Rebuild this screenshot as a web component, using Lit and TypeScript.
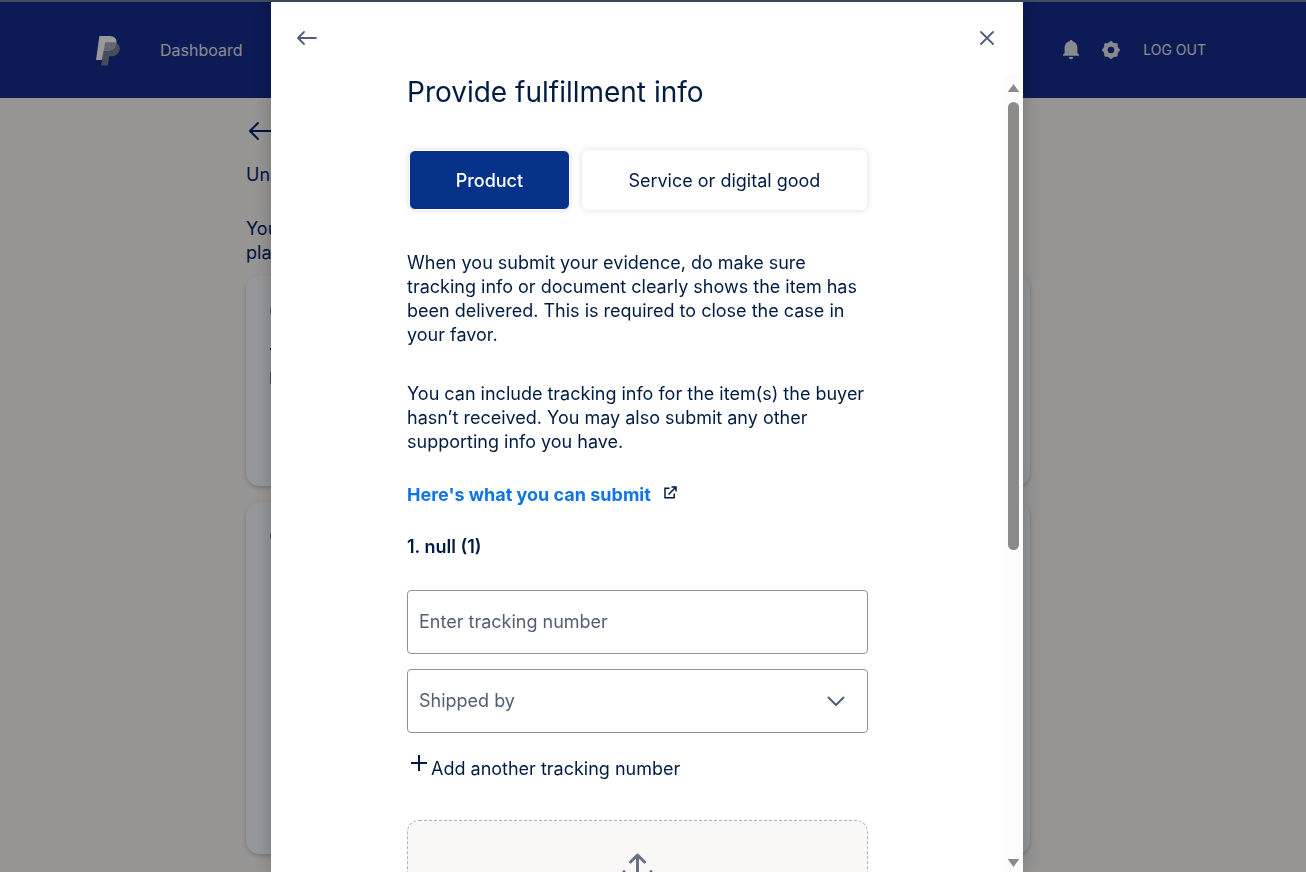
import { LitElement, html, css, svg } from "lit";
import { customElement, state } from "lit/decorators.js";

const stroke = (d: string, size: number, width: number) => html`
  <svg width=${size} height=${size} viewBox="0 0 ${size} ${size}" fill="none" stroke="currentColor"
    stroke-width=${width} stroke-linecap="round" stroke-linejoin="round" aria-hidden="true">
    ${svg`<path d=${d}></path>`}
  </svg>`;

@customElement("account-page")
export class AccountPage extends LitElement {
  static styles = css`
    :host {
      display: block;
      min-height: 100vh;
      background: #faf8f5;
      color: #00216b;
      font-size: 18px;
      line-height: 24px;
    }
    .bar {
      box-sizing: border-box;
      height: 98px;
      border-top: 2px solid #6e7f9c;
      background: #142c8e;
      padding: 0 100px 0 96px;
      display: flex;
      align-items: center;
      color: #e4e8ec;
    }
    .bar a {
      color: inherit;
      text-decoration: none;
    }
    .logo {
      display: block;
      width: 24px;
      height: 30px;
      margin-top: 2px;
    }
    .nav {
      margin-left: 40px;
      font-size: 16px;
      flex: 1;
    }
    .tools {
      display: flex;
      align-items: center;
      gap: 20px;
    }
    .icon {
      border: 0;
      padding: 0;
      background: none;
      color: #e4e6ec;
      display: block;
      height: 20px;
      cursor: pointer;
    }
    .icon svg {
      display: block;
    }
    .logout {
      font-size: 14px;
      margin-left: 2px;
    }
    .content {
      max-width: 784px;
      margin: 0 auto;
      padding: 20px 30px 0 0;
    }
    .back {
      display: block;
      height: 26px;
      color: #00216b;
    }
    p {
      margin: 0;
    }
    .status {
      padding-top: 19px;
    }
    .note {
      padding: 30px 0 10px;
    }
    .card {
      box-sizing: border-box;
      height: 211px;
      margin-bottom: 16px;
      padding: 30px 24px;
      border-radius: 14px;
      background: #f9fbff;
      box-shadow: 0 2px 4px rgba(0, 20, 70, 0.2);
    }
    .card.tall {
      height: 352px;
      padding-top: 28px;
    }
    .card svg {
      display: block;
    }
  `;

  render() {
    return html`
      <header class="bar">
        <a href="#home" aria-label="PayPal">
          <svg class="logo" viewBox="0 0 24 30" aria-hidden="true">
            <path fill="#75819c" d="M20.6 7.2C23.4 8.6 24.3 11 23.5 14.2C22.5 18.4 19.4 20.2 15 20.2H13.2L11.8 29.6H5.2L8.6 7.2Z"></path>
            <path fill="#fff" d="M3.4 0H13.2C18.6 0 21.3 3 20.3 7.6C19.2 12.6 16 14.8 10.9 14.8H7.6L6 24H0Z"></path>
            <path fill="#a3abc0" d="M9.2 6.2H17.6C18.8 6.2 19.8 6.6 20.4 7.1C19.4 12.5 16 14.8 10.9 14.8H7.7Z"></path>
          </svg>
        </a>
        <nav class="nav"><a href="#dashboard">Dashboard</a></nav>
        <div class="tools">
          <button class="icon" aria-label="Notifications">
            <svg width="20" height="20" viewBox="0 0 20 20" fill="currentColor" aria-hidden="true">
              <path d="M10 0C10.900 0 11.500.6 11.600 1.300C14.800 2.200 16.400 4.600 16.400 7.600V13.200L18 14.600V15.800H2V14.600L3.600 13.200V7.600C3.600 4.600 5.200 2.200 8.400 1.300C8.500.6 9.100 0 10 0ZM7.800 17H12.200C12 18.500 11.200 19.200 10 19.200S8 18.500 7.800 17Z"></path>
            </svg>
          </button>
          <button class="icon" aria-label="Settings">
            <svg width="20" height="20" viewBox="0 0 20 20" aria-hidden="true">
              <circle cx="10" cy="10" r="5.500" fill="none" stroke="currentColor" stroke-width="4.400"></circle>
              <path fill="none" stroke="currentColor" stroke-width="3.600" stroke-linecap="round"
                d="M10 2.800V2.800M15.100 4.900V4.900M17.200 10V10M15.100 15.100V15.100M10 17.200V17.200M4.900 15.100V15.100M2.800 10V10M4.900 4.900V4.900"></path>
            </svg>
          </button>
          <a class="logout" href="#logout">LOG OUT</a>
        </div>
      </header>
      <main class="content">
        <a class="back" href="#back" aria-label="Back">${stroke("M4 13H26M12 5L4 13L12 21", 26, 2)}</a>
        <p class="status">Una</p>
        <p class="note">You<br />pla</p>
        <section class="card">
          <svg width="16" height="80" viewBox="0 0 16 80" fill="none" stroke="#5f7fb5" stroke-width="2" aria-hidden="true">
            <circle cx="8" cy="6" r="7"></circle>
            <path d="M0 44H8" stroke="#00216b"></path>
            <path d="M1 67V79"></path>
          </svg>
        </section>
        <section class="card tall">
          <svg width="16" height="14" viewBox="0 0 16 14" fill="none" stroke="#5f7fb5" stroke-width="2" aria-hidden="true">
            <circle cx="8" cy="6" r="7"></circle>
          </svg>
        </section>
      </main>
    `;
  }
}

@customElement("fulfillment-dialog")
export class FulfillmentDialog extends LitElement {
  static styles = css`
    :host {
      box-sizing: border-box;
      width: 752px;
      max-width: 100%;
      height: 100%;
      display: flex;
      flex-direction: column;
      background: #fff;
      color: #001c43;
      box-shadow: 0 0 18px rgba(0, 0, 0, 0.22);
      font-size: 18px;
      line-height: 24px;
    }
    button,
    input,
    select {
      font: inherit;
      color: inherit;
    }
    svg {
      display: block;
    }
    .top {
      display: flex;
      justify-content: space-between;
      height: 72px;
      flex: none;
      padding: 0 24px;
      align-items: center;
    }
    .icon {
      border: 0;
      padding: 0;
      background: none;
      color: #545d7a;
      cursor: pointer;
    }
    .body {
      flex: 1;
      min-height: 0;
      display: flex;
    }
    .form {
      flex: 1;
      min-width: 0;
      overflow: hidden;
      padding: 0 136px;
    }
    .scroll {
      width: 19px;
      box-sizing: border-box;
      padding: 9px 4px 4px;
      display: flex;
      flex-direction: column;
      background: #fcfcfc;
      color: #8c8b89;
    }
    .track {
      flex: 1;
      padding: 9px 0;
    }
    .thumb {
      height: 60%;
      border-radius: 6px;
      background: #8c8b89;
    }
    h1 {
      margin: 0;
      font-size: 28px;
      line-height: 36px;
      font-weight: 400;
    }
    .tabs {
      display: flex;
      gap: 12px;
      padding: 0 1px 0 2px;
      margin: 40px 0 41px;
    }
    .tab {
      flex: 1 1 auto;
      height: 60px;
      padding: 2px 44px 0;
      white-space: nowrap;
      border: 1px solid #fff;
      border-radius: 6px;
      background: #fff;
      box-shadow: 0 0 6px rgba(0, 20, 53, 0.14);
      cursor: pointer;
    }
    .tab.on {
      background: #063389;
      color: #fff;
      font-weight: 500;
    }
    p {
      margin: 0 0 35px;
    }
    .help {
      display: flex;
      gap: 13px;
      margin-top: -6px;
    }
    .help a {
      color: #0f74e6;
      font-weight: 700;
      text-decoration: none;
    }
    .help svg {
      margin-top: 3px;
    }
    h2 {
      margin: 28px 0 31px;
      font-size: 18px;
      line-height: 24px;
      font-weight: 600;
    }
    .field {
      display: grid;
      align-items: center;
      margin-bottom: 15px;
      color: #545d72;
    }
    .field > * {
      grid-area: 1 / 1;
    }
    .field label {
      justify-self: start;
      padding-left: 12px;
      pointer-events: none;
    }
    .field input,
    .field select {
      box-sizing: border-box;
      width: 100%;
      height: 64px;
      padding: 0 11px;
      border: 1px solid #909197;
      border-radius: 4px;
      background: #fff;
      appearance: none;
    }
    .field input:valid + label,
    .field select:valid + label {
      visibility: hidden;
    }
    .field svg {
      justify-self: end;
      margin-right: 20px;
      color: #545d7a;
      pointer-events: none;
    }
    .add {
      display: flex;
      gap: 4px;
      border: 0;
      padding: 0 0 0 4px;
      margin: 24px 0 39px;
      background: none;
      cursor: pointer;
    }
    .add svg {
      margin-top: -2px;
    }
    .drop {
      box-sizing: border-box;
      height: 160px;
      padding-top: 32px;
      border: 1px dashed #aeb2bd;
      border-radius: 12px;
      background: #f9f8f7;
      color: #687083;
      display: flex;
      justify-content: center;
    }
  `;

  @state() private kind = "product";

  render() {
    const tab = (id: string, label: string) => html`
      <button class="tab ${this.kind === id ? "on" : ""}" aria-pressed=${this.kind === id}
        @click=${() => (this.kind = id)}>${label}</button>`;
    return html`
      <div class="top">
        <button class="icon" aria-label="Back">${stroke("M3 12H21M9 6L3 12L9 18", 24, 1.8)}</button>
        <button class="icon" aria-label="Close">${stroke("M6 6L18 18M18 6L6 18", 24, 1.8)}</button>
      </div>
      <div class="body">
        <div class="form">
          <h1>Provide fulfillment info</h1>
          <div class="tabs">
            ${tab("product", "Product")}
            ${tab("service", "Service or digital good")}
          </div>
          <p>When you submit your evidence, do make sure tracking info or document clearly shows the item has been delivered. This is required to close the case in your favor.</p>
          <p>You can include tracking info for the item(s) the buyer hasn’t received. You may also submit any other supporting info you have.</p>
          <div class="help">
            <a href="#guide">Here's what you can submit</a>
            <svg width="13" height="13" viewBox="0 0 13 13" fill="none" stroke="currentColor" stroke-width="1.500" aria-hidden="true">
              <path d="M5.500 2.200H1V11.800H10.200V7.500M4.500 8.500L11.500 1.500M7.500 1H12V5.500"></path>
            </svg>
          </div>
          <h2>1. null (1)</h2>
          <div class="field">
            <input id="tracking" type="text" required />
            <label for="tracking">Enter tracking number</label>
          </div>
          <div class="field">
            <select id="carrier" required><option value=""></option></select>
            <label for="carrier">Shipped by</label>
            ${stroke("M4.500 8.500L12 16L19.500 8.500", 24, 2)}
          </div>
          <button class="add">
            <svg width="16" height="16" viewBox="0 0 16 16" stroke="currentColor" stroke-width="2" fill="none" aria-hidden="true">
              <path d="M8 0V16M0 8H16"></path>
            </svg>
            <span>Add another tracking number</span>
          </button>
          <div class="drop">${stroke("M15.500 2V24M8.500 9L15.500 2L22.500 9M2 18.500V28H29V18.500", 32, 3)}</div>
        </div>
        <div class="scroll" aria-hidden="true">
          <svg width="11" height="10" viewBox="0 0 11 10" fill="currentColor"><path d="M5.500 1L11 8.500V9H0V8.500Z"></path></svg>
          <div class="track"><div class="thumb"></div></div>
          <svg width="11" height="10" viewBox="0 0 11 10" fill="currentColor"><path d="M5.500 9L11 1.500V1H0V1.500Z"></path></svg>
        </div>
      </div>
    `;
  }
}

@customElement("app-root")
export class AppRoot extends LitElement {
  static styles = css`
    :host {
      display: block;
      height: 100vh;
      overflow: hidden;
      font-family: Inter, "Liberation Sans", sans-serif;
    }
    .overlay {
      position: fixed;
      inset: 0;
      box-sizing: border-box;
      padding: 2px 12px 0 0;
      display: flex;
      justify-content: center;
      background: rgba(0, 0, 0, 0.4);
    }
  `;

  render() {
    return html`
      <account-page></account-page>
      <div class="overlay">
        <fulfillment-dialog role="dialog" aria-modal="true" aria-label="Provide fulfillment info"></fulfillment-dialog>
      </div>
    `;
  }
}
